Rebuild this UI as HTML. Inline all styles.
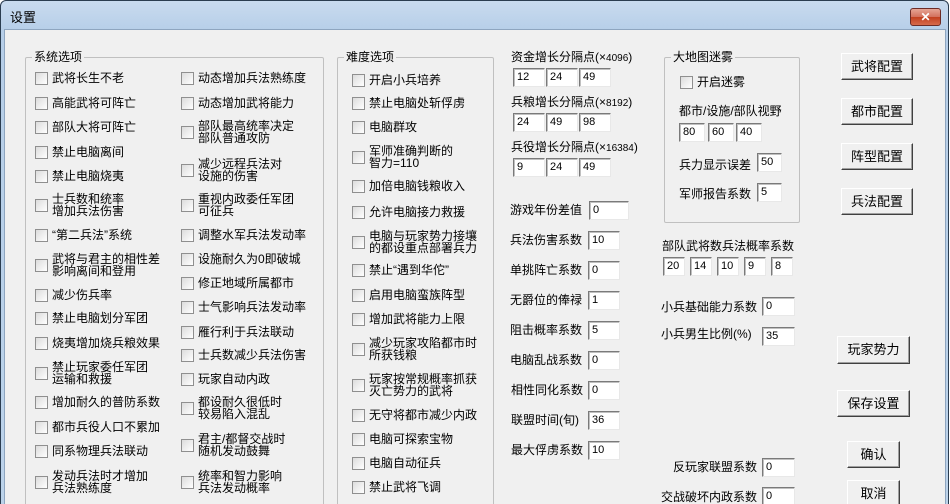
<!DOCTYPE html>
<html><head><meta charset="utf-8">
<style>
*{margin:0;padding:0;box-sizing:border-box}
html,body{width:950px;height:504px;overflow:hidden;background:#fff}
body{font-family:"Liberation Sans","Noto Sans CJK SC",sans-serif;font-size:12px;color:#000;position:relative}
#frame{position:absolute;left:0;top:0;width:949px;height:510px;border:1px solid #2b3d50;border-radius:6px 6px 0 0;background:linear-gradient(#c9dbef,#b6cee8 30px,#bcd3ea);}
#title{position:absolute;left:10px;top:7px;font-size:13px;color:#000}
#close{position:absolute;left:910px;top:8px;width:31px;height:18px;border:1px solid #6d2c26;border-radius:3px;background:linear-gradient(#e6a595,#d2705c 50%,#c2401f 51%,#d66a4b);color:#fff;font-weight:bold;font-size:12px;text-align:center;line-height:16px}
#client{position:absolute;left:4px;top:29px;width:942px;height:480px;background:#f0f0f0;border:1px solid #8ea5bf}
.a{position:absolute}
.i{position:absolute;height:14px;display:flex;align-items:center;white-space:nowrap}
.b{flex:none;width:13px;height:13px;border:1px solid #8f8f8f;background:linear-gradient(135deg,#dcdcdc,#fff)}
.l{margin-left:4px;line-height:12px}
.g{position:absolute;border:1px solid #c0c0c0;border-radius:2px}
.gl{position:absolute;top:-8px;left:6px;background:#f0f0f0;padding:0 2px;line-height:14px}
.e{position:absolute;height:19px;background:#fff;border:1px solid;border-color:#7a7a7a #e8e8e8 #e8e8e8 #7a7a7a;box-shadow:inset 1px 1px 0 #c0c0c0;font-size:11px;padding-left:3px;line-height:17px}
.btn{position:absolute;background:#f0f0f0;border:1px solid;border-color:#fff #404040 #404040 #fff;box-shadow:inset -1px -1px 0 #a0a0a0;text-align:center;font-size:13px}
.t{position:absolute;line-height:14px;white-space:nowrap}
</style></head><body>
<div id="frame"></div>
<div id="title">设置</div>
<div id="close">✕</div>
<div id="client"></div>

<!-- system group -->
<div class="g" style="left:25px;top:57px;width:299px;height:460px"><span class="gl">系统选项</span></div>
<div class="g" style="left:337px;top:57px;width:157px;height:460px"><span class="gl">难度选项</span></div>
<div class="g" style="left:664px;top:57px;width:136px;height:166px"><span class="gl">大地图迷雾</span></div>

<!-- col1 -->
<div class="i" style="left:35px;top:71px"><span class="b"></span><span class="l">武将长生不老</span></div>
<div class="i" style="left:35px;top:96px"><span class="b"></span><span class="l">高能武将可阵亡</span></div>
<div class="i" style="left:35px;top:120px"><span class="b"></span><span class="l">部队大将可阵亡</span></div>
<div class="i" style="left:35px;top:145px"><span class="b"></span><span class="l">禁止电脑离间</span></div>
<div class="i" style="left:35px;top:169px"><span class="b"></span><span class="l">禁止电脑烧夷</span></div>
<div class="i" style="left:35px;top:198px"><span class="b"></span><span class="l">士兵数和统率<br>增加兵法伤害</span></div>
<div class="i" style="left:35px;top:228px"><span class="b"></span><span class="l">“第二兵法”系统</span></div>
<div class="i" style="left:35px;top:258px"><span class="b"></span><span class="l">武将与君主的相性差<br>影响离间和登用</span></div>
<div class="i" style="left:35px;top:288px"><span class="b"></span><span class="l">减少伤兵率</span></div>
<div class="i" style="left:35px;top:311px"><span class="b"></span><span class="l">禁止电脑划分军团</span></div>
<div class="i" style="left:35px;top:336px"><span class="b"></span><span class="l">烧夷增加烧兵粮效果</span></div>
<div class="i" style="left:35px;top:366px"><span class="b"></span><span class="l">禁止玩家委任军团<br>运输和救援</span></div>
<div class="i" style="left:35px;top:395px"><span class="b"></span><span class="l">增加耐久的普防系数</span></div>
<div class="i" style="left:35px;top:420px"><span class="b"></span><span class="l">都市兵役人口不累加</span></div>
<div class="i" style="left:35px;top:444px"><span class="b"></span><span class="l">同系物理兵法联动</span></div>
<div class="i" style="left:35px;top:475px"><span class="b"></span><span class="l">发动兵法时才增加<br>兵法熟练度</span></div>

<!-- col2 -->
<div class="i" style="left:181px;top:71px"><span class="b"></span><span class="l">动态增加兵法熟练度</span></div>
<div class="i" style="left:181px;top:96px"><span class="b"></span><span class="l">动态增加武将能力</span></div>
<div class="i" style="left:181px;top:125px"><span class="b"></span><span class="l">部队最高统率决定<br>部队普通攻防</span></div>
<div class="i" style="left:181px;top:163px"><span class="b"></span><span class="l">减少远程兵法对<br>设施的伤害</span></div>
<div class="i" style="left:181px;top:198px"><span class="b"></span><span class="l">重视内政委任军团<br>可征兵</span></div>
<div class="i" style="left:181px;top:228px"><span class="b"></span><span class="l">调整水军兵法发动率</span></div>
<div class="i" style="left:181px;top:252px"><span class="b"></span><span class="l">设施耐久为0即破城</span></div>
<div class="i" style="left:181px;top:276px"><span class="b"></span><span class="l">修正地域所属都市</span></div>
<div class="i" style="left:181px;top:300px"><span class="b"></span><span class="l">士气影响兵法发动率</span></div>
<div class="i" style="left:181px;top:325px"><span class="b"></span><span class="l">雁行利于兵法联动</span></div>
<div class="i" style="left:181px;top:348px"><span class="b"></span><span class="l">士兵数减少兵法伤害</span></div>
<div class="i" style="left:181px;top:372px"><span class="b"></span><span class="l">玩家自动内政</span></div>
<div class="i" style="left:181px;top:401px"><span class="b"></span><span class="l">都设耐久很低时<br>较易陷入混乱</span></div>
<div class="i" style="left:181px;top:438px"><span class="b"></span><span class="l">君主/都督交战时<br>随机发动鼓舞</span></div>
<div class="i" style="left:181px;top:475px"><span class="b"></span><span class="l">统率和智力影响<br>兵法发动概率</span></div>

<!-- col3 -->
<div class="i" style="left:352px;top:73px"><span class="b"></span><span class="l">开启小兵培养</span></div>
<div class="i" style="left:352px;top:96px"><span class="b"></span><span class="l">禁止电脑处斩俘虏</span></div>
<div class="i" style="left:352px;top:120px"><span class="b"></span><span class="l">电脑群攻</span></div>
<div class="i" style="left:352px;top:150px"><span class="b"></span><span class="l">军师准确判断的<br>智力=110</span></div>
<div class="i" style="left:352px;top:179px"><span class="b"></span><span class="l">加倍电脑钱粮收入</span></div>
<div class="i" style="left:352px;top:205px"><span class="b"></span><span class="l">允许电脑接力救援</span></div>
<div class="i" style="left:352px;top:235px"><span class="b"></span><span class="l">电脑与玩家势力接壤<br>的都设重点部署兵力</span></div>
<div class="i" style="left:352px;top:263px"><span class="b"></span><span class="l">禁止“遇到华佗”</span></div>
<div class="i" style="left:352px;top:288px"><span class="b"></span><span class="l">启用电脑蛮族阵型</span></div>
<div class="i" style="left:352px;top:312px"><span class="b"></span><span class="l">增加武将能力上限</span></div>
<div class="i" style="left:352px;top:342px"><span class="b"></span><span class="l">减少玩家攻陷都市时<br>所获钱粮</span></div>
<div class="i" style="left:352px;top:378px"><span class="b"></span><span class="l">玩家按常规概率抓获<br>灭亡势力的武将</span></div>
<div class="i" style="left:352px;top:408px"><span class="b"></span><span class="l">无守将都市减少内政</span></div>
<div class="i" style="left:352px;top:432px"><span class="b"></span><span class="l">电脑可探索宝物</span></div>
<div class="i" style="left:352px;top:456px"><span class="b"></span><span class="l">电脑自动征兵</span></div>
<div class="i" style="left:352px;top:480px"><span class="b"></span><span class="l">禁止武将飞调</span></div>

<!-- right numeric -->
<div class="t" style="left:511px;top:50px">资金增长分隔点(×<span style="font-size:10px">4096</span>)</div>
<div class="e" style="left:513px;top:68px;width:32px">12</div>
<div class="e" style="left:546px;top:68px;width:32px">24</div>
<div class="e" style="left:579px;top:68px;width:32px">49</div>
<div class="t" style="left:511px;top:95px">兵粮增长分隔点(×<span style="font-size:10px">8192</span>)</div>
<div class="e" style="left:513px;top:113px;width:32px">24</div>
<div class="e" style="left:546px;top:113px;width:32px">49</div>
<div class="e" style="left:579px;top:113px;width:32px">98</div>
<div class="t" style="left:511px;top:140px">兵役增长分隔点(×<span style="font-size:10px">16384</span>)</div>
<div class="e" style="left:513px;top:158px;width:32px">9</div>
<div class="e" style="left:546px;top:158px;width:32px">24</div>
<div class="e" style="left:579px;top:158px;width:32px">49</div>

<div class="t" style="left:510px;top:203px">游戏年份差值</div><div class="e" style="left:589px;top:201px;width:40px">0</div>
<div class="t" style="left:510px;top:233px">兵法伤害系数</div><div class="e" style="left:588px;top:231px;width:32px">10</div>
<div class="t" style="left:510px;top:263px">单挑阵亡系数</div><div class="e" style="left:588px;top:261px;width:32px">0</div>
<div class="t" style="left:510px;top:293px">无爵位的俸禄</div><div class="e" style="left:588px;top:291px;width:32px">1</div>
<div class="t" style="left:510px;top:323px">阻击概率系数</div><div class="e" style="left:588px;top:321px;width:32px">5</div>
<div class="t" style="left:510px;top:353px">电脑乱战系数</div><div class="e" style="left:588px;top:351px;width:32px">0</div>
<div class="t" style="left:511px;top:383px">相性同化系数</div><div class="e" style="left:588px;top:381px;width:32px">0</div>
<div class="t" style="left:511px;top:413px">联盟时间(旬)</div><div class="e" style="left:588px;top:411px;width:32px">36</div>
<div class="t" style="left:511px;top:443px">最大俘虏系数</div><div class="e" style="left:588px;top:441px;width:32px">10</div>

<!-- fog -->
<div class="i" style="left:680px;top:75px"><span class="b"></span><span class="l">开启迷雾</span></div>
<div class="t" style="left:679px;top:104px">都市/设施/部队视野</div>
<div class="e" style="left:679px;top:123px;width:26px">80</div>
<div class="e" style="left:708px;top:123px;width:26px">60</div>
<div class="e" style="left:736px;top:123px;width:26px">40</div>
<div class="t" style="left:679px;top:158px">兵力显示误差</div><div class="e" style="left:757px;top:153px;width:25px">50</div>
<div class="t" style="left:679px;top:187px">军师报告系数</div><div class="e" style="left:757px;top:183px;width:25px">5</div>

<!-- lower right -->
<div class="t" style="left:662px;top:239px">部队武将数兵法概率系数</div>
<div class="e" style="left:663px;top:257px;width:22px">20</div>
<div class="e" style="left:690px;top:257px;width:22px">14</div>
<div class="e" style="left:717px;top:257px;width:22px">10</div>
<div class="e" style="left:744px;top:257px;width:22px">9</div>
<div class="e" style="left:771px;top:257px;width:22px">8</div>
<div class="t" style="left:661px;top:300px">小兵基础能力系数</div><div class="e" style="left:762px;top:297px;width:33px">0</div>
<div class="t" style="left:661px;top:327px">小兵男生比例(%)</div><div class="e" style="left:762px;top:327px;width:33px">35</div>
<div class="t" style="left:673px;top:460px">反玩家联盟系数</div><div class="e" style="left:762px;top:458px;width:33px">0</div>
<div class="t" style="left:661px;top:490px">交战破坏内政系数</div><div class="e" style="left:762px;top:487px;width:33px">0</div>

<!-- buttons -->
<div class="btn" style="left:841px;top:53px;width:72px;height:27px;line-height:25px">武将配置</div>
<div class="btn" style="left:841px;top:98px;width:72px;height:27px;line-height:25px">都市配置</div>
<div class="btn" style="left:841px;top:143px;width:72px;height:27px;line-height:25px">阵型配置</div>
<div class="btn" style="left:841px;top:188px;width:72px;height:27px;line-height:25px">兵法配置</div>
<div class="btn" style="left:837px;top:336px;width:73px;height:28px;line-height:26px">玩家势力</div>
<div class="btn" style="left:837px;top:390px;width:73px;height:27px;line-height:25px">保存设置</div>
<div class="btn" style="left:847px;top:441px;width:53px;height:27px;line-height:25px">确认</div>
<div class="btn" style="left:847px;top:480px;width:53px;height:27px;line-height:25px">取消</div>
</body></html>
